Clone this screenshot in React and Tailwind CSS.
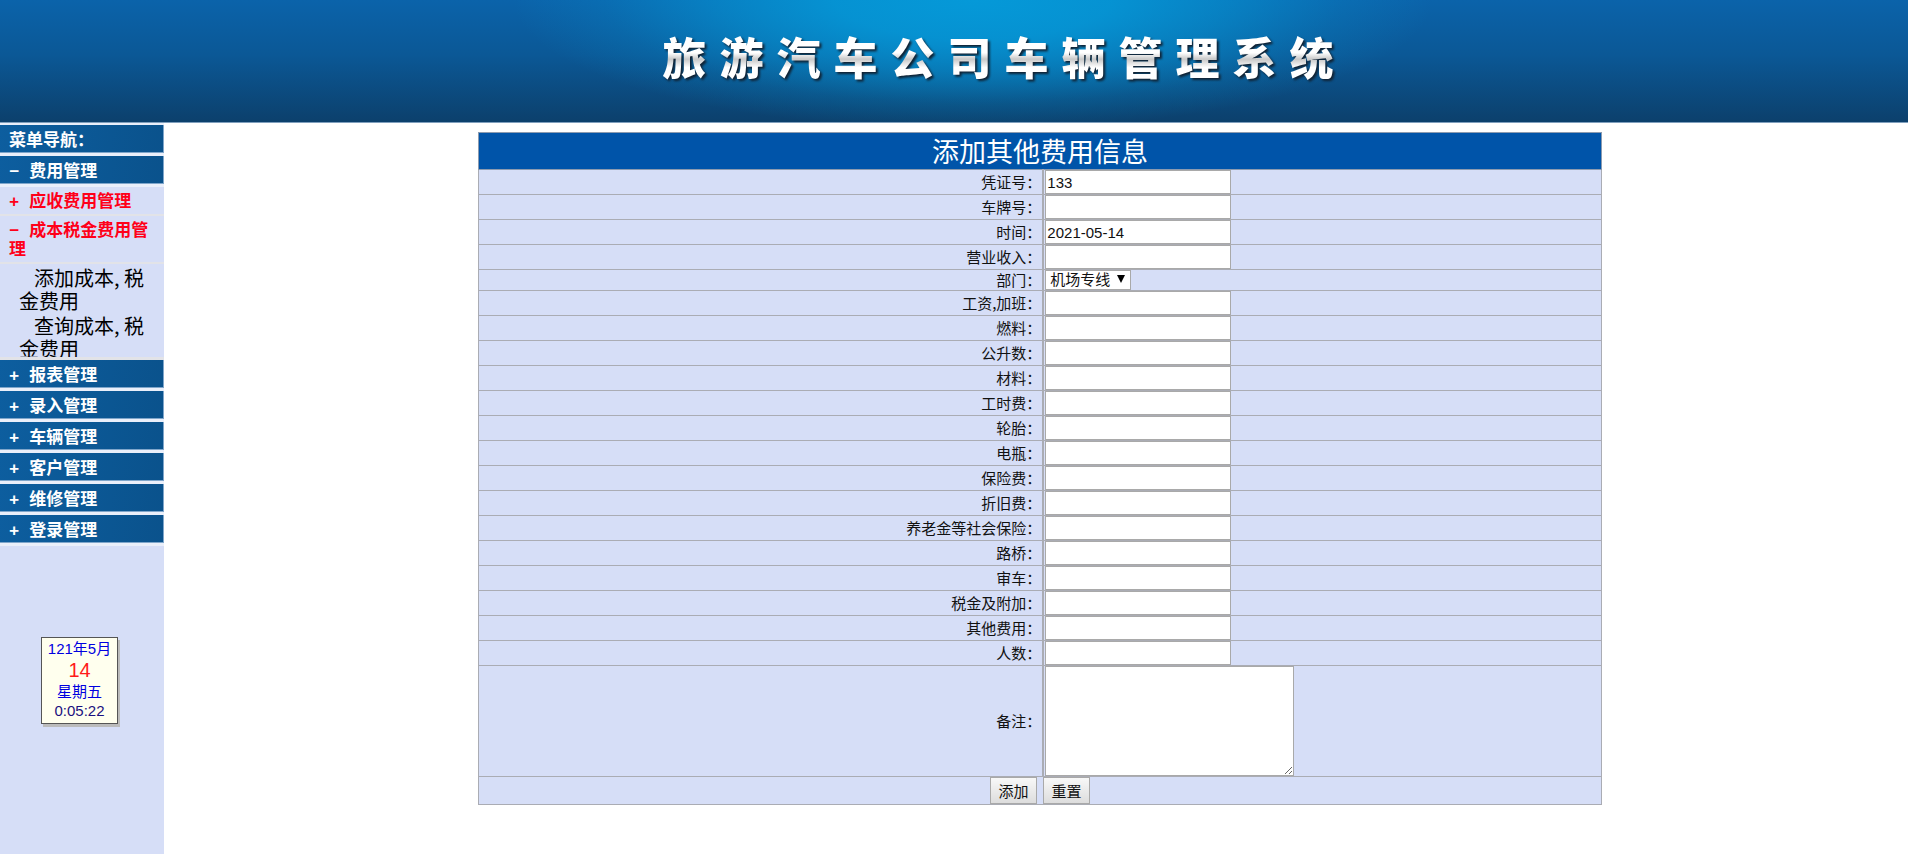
import { useState } from 'react';

const FIELDS = [
  { name: 'pingzheng', label: '凭证号：', value: '133' },
  { name: 'chepai', label: '车牌号：' },
  { name: 'shijian', label: '时间：', value: '2021-05-14' },
  { name: 'shouru', label: '营业收入：' },
  { name: 'bumen', label: '部门：', options: ['机场专线'] },
  { name: 'gongzi', label: '工资,加班：' },
  { name: 'ranliao', label: '燃料：' },
  { name: 'gongsheng', label: '公升数：' },
  { name: 'cailiao', label: '材料：' },
  { name: 'gongshi', label: '工时费：' },
  { name: 'luntai', label: '轮胎：' },
  { name: 'dianping', label: '电瓶：' },
  { name: 'baoxian', label: '保险费：' },
  { name: 'zhejiu', label: '折旧费：' },
  { name: 'shebao', label: '养老金等社会保险：' },
  { name: 'luqiao', label: '路桥：' },
  { name: 'shenche', label: '审车：' },
  { name: 'shuijin', label: '税金及附加：' },
  { name: 'qita', label: '其他费用：' },
  { name: 'renshu', label: '人数：' },
];

const MENUS = ['报表管理', '录入管理', '车辆管理', '客户管理', '维修管理', '登录管理'];

const TITLE = '旅游汽车公司车辆管理系统';

function Header() {
  return (
    <header className="h-[123px] border-b border-[#7f9fbd] bg-[radial-gradient(ellipse_460px_130px_at_51%_0,#0599d8_0%,#0599d8e0_30%,#0599d890_55%,#0599d830_80%,transparent_100%),linear-gradient(#0b63aa,#0b5896_45%,#0c406c)]">
      <h1 className="flex justify-center gap-[13px] pl-[88px] pt-6 text-[44px] font-black leading-[64px] drop-shadow-[2px_2px_1px_#123]">
        {TITLE.split('').map((char, i) => (
          <span key={i} className="bg-[linear-gradient(#fff_45%,#c8c8c8_55%,#fff_68%)] bg-clip-text text-transparent">
            {char}
          </span>
        ))}
      </h1>
    </header>
  );
}

function Sign({ children }) {
  return <span className="mr-[10px] font-['Liberation_Mono',monospace] leading-3">{children}</span>;
}

function MenuBar({ sign, children }) {
  return (
    <button
      type="button"
      className="block h-[31px] w-full border-b-3 border-[#eaeffa] bg-[linear-gradient(100deg,#0d5e9f,#0a528c)] pb-px pl-[9px] text-left font-bold leading-[26px] text-white shadow-[inset_-1px_-1px_0_#7fa6cb]"
    >
      {sign && <Sign>{sign}</Sign>}
      {children}
    </button>
  );
}

function SubMenu({ sign, children }) {
  return (
    <button
      type="button"
      className="block w-full border-b-2 border-[#e2e3e8] pb-[5px] pl-[9px] pr-1 pt-[3px] text-left font-bold leading-[19px] text-[#ff0019]"
    >
      <Sign>{sign}</Sign>
      {children}
    </button>
  );
}

function Clock() {
  return (
    <div className="ml-[41px] mt-[91px] h-[87px] w-[77px] border border-[#555] bg-[#ffffee] pt-px text-center text-[15px] text-[#0000e0] shadow-[2px_3px_0_#bbb] font-['Liberation_Sans','Noto_Sans_CJK_SC',sans-serif]">
      <div className="leading-5">121年5月</div>
      <div className="text-xl leading-[22px] text-[#ff1a1a]">14</div>
      <div className="leading-[22px]">星期五</div>
      <div className="leading-4 text-[#1a1080]">0:05:22</div>
    </div>
  );
}

function Sidebar() {
  return (
    <aside className="w-[164px] shrink-0 bg-[#d6def7] text-[17px]">
      <nav className="border-t-2 border-[#eaeffa]">
        <MenuBar>菜单导航：</MenuBar>
        <MenuBar sign="−">费用管理</MenuBar>
        <SubMenu sign="+">应收费用管理</SubMenu>
        <SubMenu sign="−">成本税金费用管理</SubMenu>
        <ul className="h-24 overflow-hidden border-b-3 border-[#e2e3e8] pl-[19px] pr-3 pt-[2px] text-xl leading-[23px] text-black">
          <li className="mb-[2px] indent-[15px]"><a href="#add">添加成本, 税金费用</a></li>
          <li className="indent-[15px]"><a href="#query">查询成本, 税金费用</a></li>
        </ul>
        {MENUS.map((menu) => (
          <MenuBar key={menu} sign="+">{menu}</MenuBar>
        ))}
      </nav>
      <Clock />
    </aside>
  );
}

function SelectField({ id, options }) {
  return (
    <span className="relative block w-[86px]">
      <select
        id={id}
        className="block h-5 w-full appearance-none border border-[#a9a9a9] bg-white pl-1 text-[15px] leading-[18px]"
      >
        {options.map((option) => (
          <option key={option}>{option}</option>
        ))}
      </select>
      <svg viewBox="0 0 8 8" className="pointer-events-none absolute right-[6px] top-[5px] size-2">
        <path d="M0 0h8L4 8z" fill="#000" />
      </svg>
    </span>
  );
}

function TextField({ id, value, onChange }) {
  return (
    <input
      id={id}
      type="text"
      value={value}
      onChange={onChange}
      className="block h-6 w-[186px] border border-[#a9a9a9] bg-white px-px text-[15px]"
    />
  );
}

function CostForm() {
  const [values, setValues] = useState(
    Object.fromEntries(FIELDS.map((f) => [f.name, f.value || '']))
  );

  const labelCell = 'w-[50.3%] border border-r-2 border-[#aaacb4] p-0 pr-px text-right';
  const inputCell = 'border border-[#aaacb4] p-0 pl-px font-["Liberation_Sans","Noto_Sans_CJK_SC",sans-serif]';

  return (
    <form onSubmit={(e) => e.preventDefault()}>
      <table className="mx-auto w-[64.8%] border-collapse border border-[#aaacb4] bg-[#d6def7] text-[15px] leading-5 text-[#111]">
        <thead>
          <tr>
            <th colSpan={2} className="h-[37px] border border-[#8c9bb0] bg-[#0054a9] p-0 text-[27px] font-normal leading-9 text-white">
              添加其他费用信息
            </th>
          </tr>
        </thead>
        <tbody>
          {FIELDS.map((field) => (
            <tr key={field.name}>
              <td className={labelCell}>
                <label htmlFor={field.name}>{field.label}</label>
              </td>
              <td className={inputCell}>
                {field.options ? (
                  <SelectField id={field.name} options={field.options} />
                ) : (
                  <TextField
                    id={field.name}
                    value={values[field.name]}
                    onChange={(e) => setValues({ ...values, [field.name]: e.target.value })}
                  />
                )}
              </td>
            </tr>
          ))}
          <tr>
            <td className={labelCell}>
              <label htmlFor="beizhu">备注：</label>
            </td>
            <td className={inputCell}>
              <textarea id="beizhu" className="block h-[110px] w-[249px] resize border border-[#a9a9a9] bg-white" />
            </td>
          </tr>
          <tr>
            <td colSpan={2} className="border border-[#aaacb4] p-0">
              <div className="flex justify-center gap-[6px]">
                <button type="submit" className="h-[27px] w-[47px] border border-[#a9a9a9] bg-linear-to-b from-[#f8f8f8] to-[#dddddd]">
                  添加
                </button>
                <button type="reset" className="h-[27px] w-[47px] border border-[#a9a9a9] bg-linear-to-b from-[#f8f8f8] to-[#dddddd]">
                  重置
                </button>
              </div>
            </td>
          </tr>
        </tbody>
      </table>
    </form>
  );
}

export default function App() {
  return (
    <div className="flex min-h-screen flex-col bg-white font-['Noto_Sans_CJK_SC',sans-serif]">
      <Header />
      <div className="flex flex-1">
        <Sidebar />
        <main className="flex-1 pl-2 pt-[9px]">
          <CostForm />
        </main>
      </div>
    </div>
  );
}
